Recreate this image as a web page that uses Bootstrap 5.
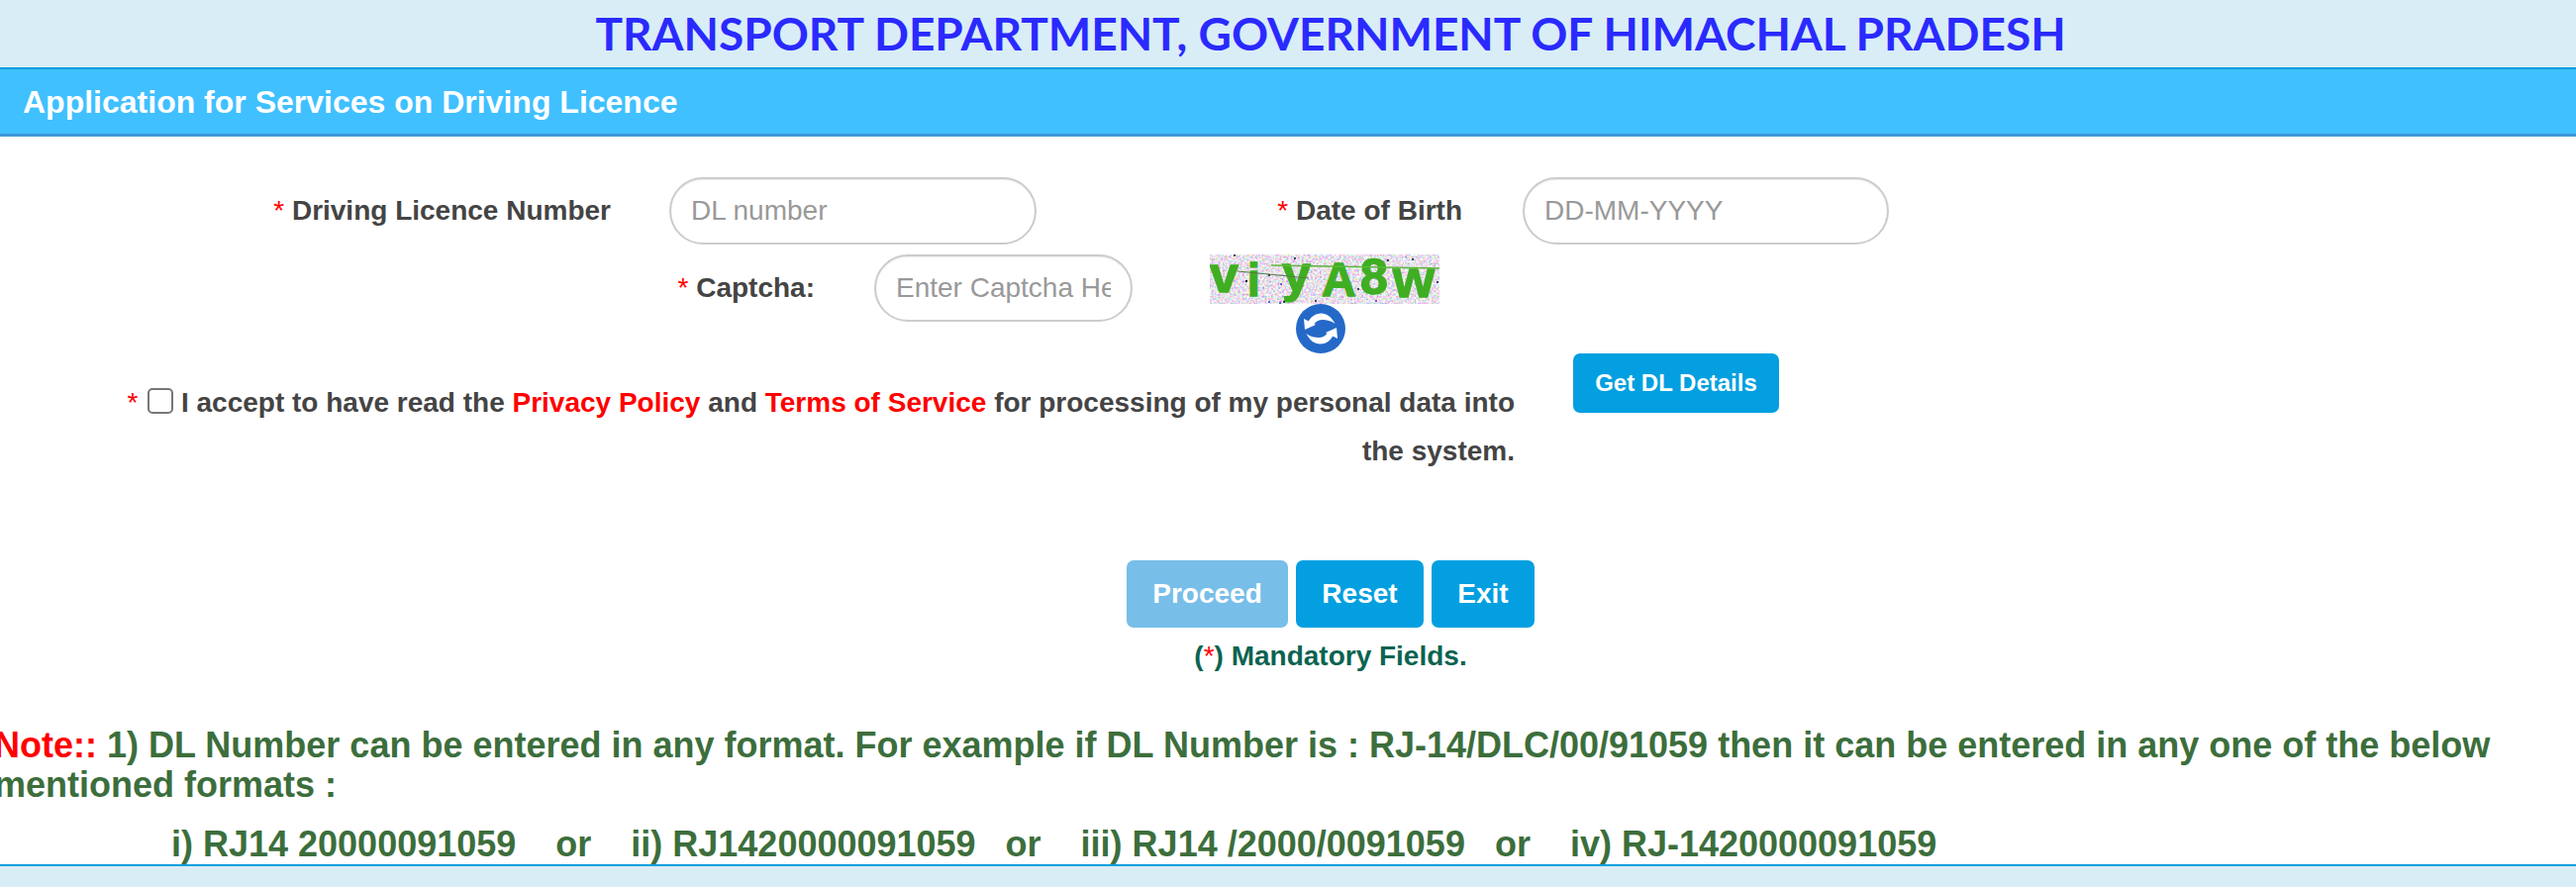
<!DOCTYPE html>
<html lang="en">
<head>
<meta charset="utf-8">
<title>Transport Department</title>
<link href="https://cdn.jsdelivr.net/npm/bootstrap@5.3.0/dist/css/bootstrap.min.css" rel="stylesheet">
<style>
html,body{height:896px;overflow:hidden;background:#fff}
body{font-family:"Liberation Sans",Arial,sans-serif;color:#444}
.top-band{height:70px;background:#d9edf7;border-bottom:2px solid #039fe0;text-align:center;padding-left:86px}
.top-band h1{font-family:Lato,sans-serif;font-weight:700;font-size:46px;line-height:68px;color:#2a2aff;margin:0;white-space:nowrap}
.sub-band{height:68px;background:#40c0ff;border-bottom:3px solid #3d99d8;color:#fff;font-weight:700;font-size:32px;line-height:66px;padding-left:23px}
.form-zone{padding-top:41px}
.lbl-txt{font-size:28px;font-weight:700;text-align:right;color:#444;margin:0}
.req{color:#f00;font-weight:400}
.pill-in{height:68px;border:2px solid #ccc;border-radius:34px;font-size:28px;padding:0 20px;box-shadow:inset 0 1px 1px rgba(0,0,0,.075);color:#555;background:#fff}
.pill-in::placeholder{color:#999}
.lb-dl{width:617px}
.in-dl{width:371px;margin-left:59px}
.lb-dob{width:430px}
.in-dob{width:370px;margin-left:61px}
.row-two{margin-top:10px}
.lb-cap{width:823px;padding-top:13px}
.in-cap{width:261px;margin-left:60px}
.cap-col{margin-left:78px}
.cap-ref{margin-left:87px;display:block}
.cap-word{font-family:"Liberation Sans",sans-serif;font-weight:700;fill:#3fae22;stroke:#3fae22;stroke-width:1.4px}
.accept{width:1410px;margin:25px 0 0 120px;text-align:right;font-size:28px;font-weight:700;line-height:49px;color:#444}
.accept a{color:#f00;text-decoration:none}
.accept input.form-check-input{width:26px;height:26px;margin:0 0 0 2px;vertical-align:-2px;float:none;border:2px solid #767676;border-radius:5px}
.btn-teal{background:#039fe0;border:0;color:#fff;font-weight:700;border-radius:7px}
.btn-teal:hover{background:#039fe0;color:#fff}
.btn-teal:disabled{background:#77bee9;color:#fff;opacity:1}
.get-btn{width:208px;height:60px;font-size:24px;margin:0 0 0 59px;padding:0}
.act-row{margin-top:86px;padding-left:86px}
.act-row .btn{height:68px;font-size:28px;padding:0}
.b1{width:163px}.b2{width:129px}.b3{width:104px}
.mand{margin:13px 0 0;padding-left:86px;text-align:center;font-size:28px;font-weight:700;line-height:32px;color:#0b6351}
.note-box{margin:54px 0 0 -6px;width:2540px;font-size:36px;font-weight:700;line-height:40px;color:#3c6e3c}
.note-box b{color:#f00}
.note-list{margin:20px 0 0 179px;white-space:pre}
.foot-band{height:23px;background:#d9edf7;border-top:2px solid #039fe0}
</style>
</head>
<body>
<div class="top-band"><h1>TRANSPORT DEPARTMENT, GOVERNMENT OF HIMACHAL PRADESH</h1></div>
<div class="sub-band">Application for Services on Driving Licence</div>
<form class="form-zone">
  <div class="d-flex align-items-center">
    <label class="lbl-txt lb-dl"><span class="req">*</span> Driving Licence Number</label>
    <input class="pill-in in-dl" placeholder="DL number">
    <label class="lbl-txt lb-dob"><span class="req">*</span> Date of Birth</label>
    <input class="pill-in in-dob" placeholder="DD-MM-YYYY">
  </div>
  <div class="d-flex align-items-start row-two">
    <label class="lbl-txt lb-cap"><span class="req">*</span> Captcha:</label>
    <input class="pill-in in-cap" placeholder="Enter Captcha Here">
    <div class="cap-col">
      <svg class="d-block" width="232" height="50" viewBox="0 0 232 50">
        <defs><filter id="nz" x="0" y="0" width="100%" height="100%"><feTurbulence type="fractalNoise" baseFrequency="0.45" numOctaves="2" seed="7"/><feColorMatrix type="matrix" values="1.7 0 0 0 -0.02 0 1.5 0 0 0 0 0 1.7 0 0.02 0 0 0 0 1"/></filter></defs>
        <rect width="232" height="50" filter="url(#nz)"/>
        <text class="cap-word"><tspan x="0" y="38" font-size="52">v</tspan><tspan x="38" y="42" font-size="46">i</tspan><tspan x="56" y="42" font-size="46"> </tspan><tspan x="73" y="37" font-size="52">y</tspan><tspan x="113" y="42" font-size="48">A</tspan><tspan x="152" y="40" font-size="50">8</tspan><tspan x="185" y="43" font-size="54">w</tspan></text>
        <path d="M62 11 L232 14" stroke="#5cb83c" stroke-width="1.5"/>
        <path d="M28 17 L100 24" stroke="#557a44" stroke-width="1"/>
        <g fill="#113">
          <circle cx="25" cy="1" r="1"/><circle cx="86" cy="4" r="1"/><circle cx="180" cy="6" r="1"/><circle cx="205" cy="5" r="1"/><circle cx="37" cy="27" r="1.2"/><circle cx="60" cy="21" r="1"/><circle cx="75" cy="48" r="1"/><circle cx="150" cy="35" r="1"/><circle cx="230" cy="28" r="1"/><circle cx="107" cy="47" r="1"/>
        </g>
        <g fill="#33c">
          <circle cx="60" cy="48" r="1"/><circle cx="72" cy="30" r="1"/><circle cx="71" cy="49" r="1"/><circle cx="168" cy="47" r="1"/>
        </g>
      </svg>
      <svg class="cap-ref" width="50" height="50" viewBox="0 0 50 50">
        <circle cx="25" cy="25" r="25" fill="#2469c8"/>
        <g fill="#fff">
          <path d="M12.5 18 C15 13 20 9.5 25.5 9.5 C31 9.5 36 13 39.5 20 C35.5 17 31 16 27 16 C23 16 20 17.5 18 21 Z"/>
          <path d="M8 15 L9 26 L20 21 Z"/>
        </g>
        <g fill="#fff" transform="rotate(180 25 25)">
          <path d="M12.5 18 C15 13 20 9.5 25.5 9.5 C31 9.5 36 13 39.5 20 C35.5 17 31 16 27 16 C23 16 20 17.5 18 21 Z"/>
          <path d="M8 15 L9 26 L20 21 Z"/>
        </g>
      </svg>
    </div>
  </div>
  <div class="d-flex align-items-start">
    <div class="accept"><span class="req">*</span> <input class="form-check-input" type="checkbox"> I accept to have read the <a href="#">Privacy Policy</a> and <a href="#">Terms of Service</a> for processing of my personal data into the system.</div>
    <button type="button" class="btn btn-teal get-btn">Get DL Details</button>
  </div>
  <div class="d-flex justify-content-center gap-2 act-row">
    <button type="button" class="btn btn-teal b1" disabled>Proceed</button>
    <button type="button" class="btn btn-teal b2">Reset</button>
    <button type="button" class="btn btn-teal b3">Exit</button>
  </div>
  <p class="mand">(<span class="req">*</span>) Mandatory Fields.</p>
</form>
<div class="note-box"><b>Note::</b> 1) DL Number can be entered in any format. For example if DL Number is : RJ-14/DLC/00/91059 then it can be entered in any one of the below mentioned formats :
  <div class="note-list">i) RJ14 20000091059    or    ii) RJ1420000091059   or    iii) RJ14 /2000/0091059   or    iv) RJ-1420000091059</div>
</div>
<div class="fixed-bottom foot-band"></div>
<script src="https://cdn.jsdelivr.net/npm/bootstrap@5.3.0/dist/js/bootstrap.bundle.min.js"></script>
</body>
</html>
